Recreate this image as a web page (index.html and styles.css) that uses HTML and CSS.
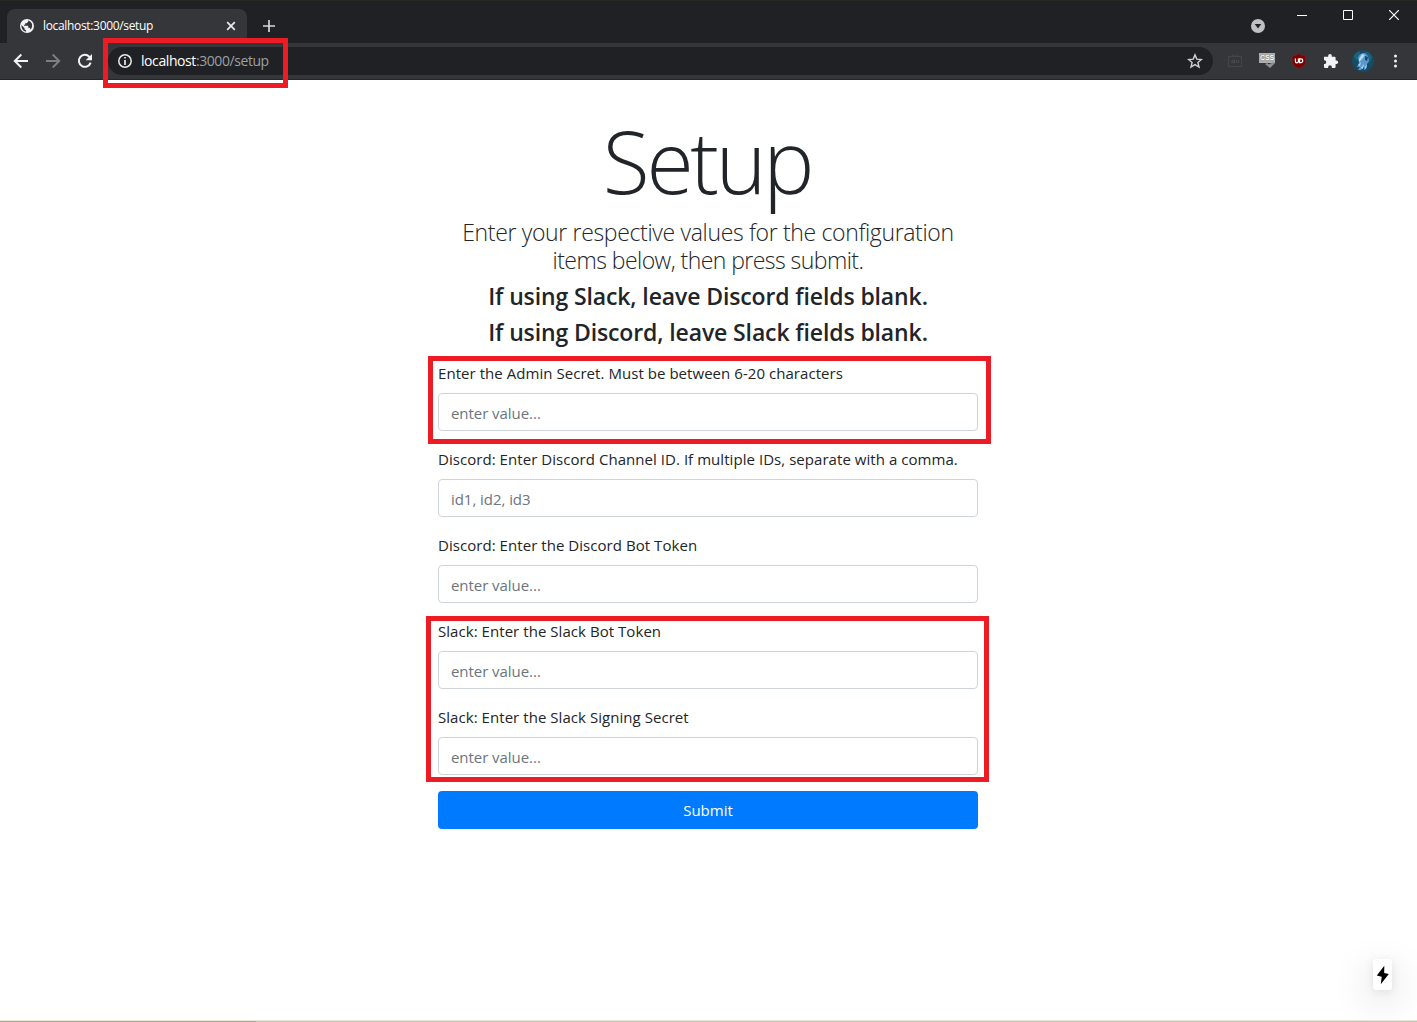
FILE: index.html
```html
<!DOCTYPE html>
<html lang="en">
<head>
<meta charset="utf-8">
<title>localhost:3000/setup</title>
<link rel="stylesheet" href="styles.css">
</head>
<body>
<div class="window">
  <header class="browser">
    <div class="tabstrip">
      <div class="tab">
        <svg class="globe" width="14" height="14" viewBox="0 0 14 14"><circle cx="7" cy="7" r="7" fill="#f1f3f4"/><path d="M1.400 6 4.500 9.100v1.100l1.600 1.400v1C3.500 12.500 1.200 9.800 1.400 6zM8.200 1.500v1.300L6.600 4.300H5.200v1.500H4v1h4.200v2h1.400l1 1.700c2.500-2.700 2.300-7.500-2.400-9z" fill="#35363a"/></svg>
        <span class="tab-title">localhost:3000/setup</span>
        <svg class="tab-close" width="10" height="10" viewBox="0 0 10 10"><path d="M1.200 1.200l7.600 7.600M8.800 1.200L1.200 8.800" stroke="#e8eaed" stroke-width="1.700"/></svg>
      </div>
      <svg class="new-tab" width="12" height="12" viewBox="0 0 12 12"><path d="M6 0v12M0 6h12" stroke="#d5d7da" stroke-width="1.700"/></svg>
      <div class="window-controls">
        <svg class="search-tabs" width="14" height="14" viewBox="0 0 14 14"><circle cx="7" cy="7" r="7" fill="#bdc1c6"/><path d="M3.700 5h6.600L7 9.600z" fill="#202124"/></svg>
        <svg width="10" height="11" viewBox="0 0 10 11"><path d="M0 5.500h10" stroke="#fff"/></svg>
        <svg width="10" height="11" viewBox="0 0 10 11"><path d="M.5.5h9v9h-9z" fill="none" stroke="#fff"/></svg>
        <svg width="10" height="10" viewBox="0 0 10 10"><path d="M0 0l10 10M10 0L0 10" stroke="#fff" stroke-width="1.200"/></svg>
      </div>
    </div>
    <div class="toolbar">
      <svg width="16" height="16" viewBox="0 0 16 16"><path d="M15 8H2M8.300 1.500L1.800 8l6.500 6.500" fill="none" stroke="#f1f3f4" stroke-width="2"/></svg>
      <svg width="16" height="16" viewBox="0 0 16 16"><path d="M1 8h13M7.700 1.500L14.200 8l-6.500 6.500" fill="none" stroke="#7d7f83" stroke-width="1.900"/></svg>
      <svg width="16" height="16" viewBox="0 0 16 16"><path d="M13.600 9.600A6 6 0 1 1 12.400 3.900L14 5.500" fill="none" stroke="#f1f3f4" stroke-width="2"/><path d="M15 1v6.300H8.700z" fill="#f1f3f4"/></svg>
      <div class="omnibox">
        <svg width="14" height="14" viewBox="0 0 14 14"><circle cx="7" cy="7" r="6.200" fill="none" stroke="#e8eaed" stroke-width="1.500"/><path d="M7 3v1.600M7 6v5" stroke="#e8eaed" stroke-width="1.700"/></svg>
        <span class="url"><b>localhost</b>:3000/setup</span>
        <svg class="star" width="16" height="16" viewBox="0 0 16 16"><path d="M8 1.900l1.800 4.200 4.600.4-3.500 3 1.100 4.500L8 11.600 4 14l1.100-4.500-3.500-3 4.600-.4z" fill="none" stroke="#cfd1d4" stroke-width="1.400"/></svg>
        <span class="mark mark-url"></span>
      </div>
      <div class="extensions">
        <svg width="16" height="16" viewBox="0 0 16 16"><path d="M1.500 3.500h13v10h-13zM5 1.500l3 2 3-2" fill="none" stroke="#45464a"/><path d="M4 8.500l2-1.500v3zM7.500 6.500v4M9.500 7v3M11.500 7v3" fill="none" stroke="#4a4b4f"/></svg>
        <div class="css-icon"><span>CSS</span><svg width="10" height="6" viewBox="0 0 10 6"><path d="M0 2l2-1 2 1.500L8 0l2 1-5 5z" fill="#909090"/></svg></div>
        <svg width="16" height="16" viewBox="0 0 16 16"><path d="M8 .5c2 1.500 4 2 6.700 2V8c0 3.500-2.500 6-6.700 7.700C3.800 14 1.300 11.500 1.300 8V2.500C4 2.500 6 2 8 .5z" fill="#800000" stroke="#65292b" stroke-width=".8"/><path d="M4.400 5.500v2.700c0 2.100 3 2.100 3 0V5.500M8.600 5.900h1.200c2.600 0 2.600 3.700 0 3.700H8.600z" fill="none" stroke="#fff" stroke-width="1.200"/></svg>
        <svg width="16" height="16" viewBox="0 0 16 16"><path d="M1 3.700h4.200v-.9a1.800 1.800 0 0 1 3.600 0v.9h2.500c.8 0 1.300.5 1.300 1.300v2.400h.8a1.800 1.800 0 0 1 0 3.600h-.8v2.700c0 .8-.5 1.300-1.300 1.300H8.900v-.8a1.900 1.900 0 0 0-3.800 0v.8H2.300c-.8 0-1.300-.5-1.300-1.300V11h.8a1.900 1.900 0 0 0 0-3.700H1z" fill="#f1f3f4"/></svg>
        <svg width="22" height="22" viewBox="0 0 22 22"><circle cx="11" cy="11" r="11" fill="#164b65"/><path d="M1.500 6a11 11 0 0 1 6-5l1 5-4 5zM13 1.500a10 10 0 0 1 7 6l-3 7-2-8z" fill="#17657b"/><path d="M6 8c1-4 4-5.500 7-5l3 3 1 5-2 3-1 5-2 1 0-4-3 4-3 0 2-3-3 0 2-4z" fill="#5b99cd"/><path d="M7 9l3-5 3 1-3 4-3 3zM6 15l3-3-1 4zM9 18l3-4-1 5zM13 17l2-3-1 5z" fill="#b4d9f5"/><path d="M13 6l3 1-1 4-2-1z" fill="#263f77"/></svg>
        <svg width="16" height="16" viewBox="0 0 16 16"><circle cx="8.500" cy="2.900" r="1.500" fill="#f1f3f4"/><circle cx="8.500" cy="8" r="1.500" fill="#f1f3f4"/><circle cx="8.500" cy="13.100" r="1.500" fill="#f1f3f4"/></svg>
      </div>
    </div>
  </header>
  <main class="page">
    <div class="container">
      <h1 class="display">Setup</h1>
      <div class="lead">
        <div class="lead-a">Enter your respective values for the configuration</div>
        <div class="lead-b">items below, then press submit.</div>
      </div>
      <h4 class="note">If using Slack, leave Discord fields blank.</h4>
      <h4 class="note">If using Discord, leave Slack fields blank.</h4>
      <form class="form">
        <div class="group">
          <label for="admin">Enter the Admin Secret. Must be between 6-20 characters</label>
          <input id="admin" placeholder="enter value...">
          <span class="mark mark-admin"></span>
        </div>
        <div class="group">
          <label for="channel">Discord: Enter Discord Channel ID. If multiple IDs, separate with a comma.</label>
          <input id="channel" placeholder="id1, id2, id3">
        </div>
        <div class="group">
          <label for="discord">Discord: Enter the Discord Bot Token</label>
          <input id="discord" placeholder="enter value...">
        </div>
        <div class="group">
          <label for="slack">Slack: Enter the Slack Bot Token</label>
          <input id="slack" placeholder="enter value...">
          <span class="mark mark-slack"></span>
        </div>
        <div class="group">
          <label for="signing">Slack: Enter the Slack Signing Secret</label>
          <input id="signing" placeholder="enter value...">
        </div>
        <button class="submit" type="button">Submit</button>
      </form>
    </div>
    <div class="bolt"><svg width="14" height="20" viewBox="0 0 14 20"><path d="M8.300.8L.8 10.600l4.900 1.200-.9 7.400 8-10.200-4.600-1.100z" fill="#000"/></svg></div>
  </main>
  <footer class="edge"><span></span></footer>
</div>
</body>
</html>
```
FILE: styles.css
```css
* { box-sizing: border-box; }
body { margin: 0; background: #fff; color: #212529; font-family: "Open Sans", "Noto Sans", sans-serif; }
svg { display: block; flex: none; }
.window { display: flex; flex-direction: column; width: 1417px; height: 1022px; overflow: hidden; }

.browser { height: 80px; background: #35363a; border-bottom: 1px solid #252629; }
.tabstrip { display: flex; height: 43px; background: #202124; border-top: 1px solid #262824; }
.tab { display: flex; align-items: center; width: 240px; height: 34px; margin: 8px 0 0 7px; padding: 0 11px 0 13px; background: #35363a; border-radius: 8px 8px 0 0; }
.tab-title { margin: -1px 0 0 9px; color: #fff; font-size: 12px; letter-spacing: -0.33px; white-space: nowrap; }
.tab-close { margin-left: auto; }
.new-tab { margin: 19px 0 0 16px; }
.window-controls { display: flex; gap: 36px; margin: 9px 18px 0 auto; }
.search-tabs { margin: 9px -4px 0 0; }
.toolbar { display: flex; align-items: center; gap: 16px; height: 36px; padding: 0 14px 0 13px; }
.toolbar > .omnibox { margin-left: -1px; }
.omnibox { position: relative; display: flex; align-items: center; flex: 1; height: 28px; padding: 0 10px; background: #202124; border-radius: 14px; }
.url { margin-left: 9px; color: #9aa0a6; font-size: 14px; line-height: 20px; letter-spacing: -0.42px; white-space: nowrap; }
.url b { color: #fff; font-weight: 400; }
.star { margin-left: auto; }
.extensions { display: flex; align-items: center; gap: 16px; margin-left: -2px; }
.extensions > svg:nth-child(5) { margin: 0 -3px; }
.css-icon { display: flex; flex-direction: column; align-items: center; width: 16px; height: 16px; }
.css-icon span { width: 16px; height: 10px; background: #adadad; color: #fff; font: 700 7px/10px "Liberation Sans", sans-serif; letter-spacing: -0.2px; text-align: center; text-shadow: 0 0 1px #444; }
.css-icon svg { margin: -1px 0 0 5px; }

.mark { position: absolute; z-index: 2; border: 5px solid #ed1c24; pointer-events: none; }
.mark-url { left: -5px; top: -9px; width: 185px; height: 50px; }
.mark-admin { left: -10px; top: -5px; width: 563px; height: 88px; }
.mark-slack { left: -12px; top: -3px; width: 563px; height: 166px; }

.page { display: flex; flex: 1; padding: 16px 25px 30px 438px; }
.container { width: 540px; text-align: center; }
.display { margin: 0; padding: 7px 0 0 0; font-size: 86px; font-weight: 300; line-height: 115px; letter-spacing: -3.3px; text-indent: -2px; }
.lead { margin: 0 0 8px; font-size: 23px; font-weight: 300; line-height: 28px; white-space: nowrap; }
.lead-a { letter-spacing: -0.34px; }
.lead-b { letter-spacing: -0.55px; }
.note { margin: 0 0 8px; font-size: 23px; font-weight: 600; line-height: 28px; letter-spacing: -0.12px; white-space: nowrap; }
.form { margin-top: 15px; text-align: left; }
.group { position: relative; display: flex; flex-direction: column; gap: 8px; margin-bottom: 16px; }
label { font-size: 15px; line-height: 24px; letter-spacing: 0.05px; white-space: nowrap; }
input { width: 540px; height: 38px; padding: 2px 12px 0; border: 1px solid #ced4da; border-radius: 4px; font: 15px "Open Sans", "Noto Sans", sans-serif; letter-spacing: -0.05px; }
input::placeholder { color: #6c757d; opacity: 1; }
.submit { display: block; width: 540px; height: 38px; padding: 0; border: 0; border-radius: 4px; background: #007bff; color: #fff; font: 15px "Open Sans", "Noto Sans", sans-serif; }
.bolt { display: flex; align-items: center; justify-content: center; align-self: flex-end; width: 19px; height: 31px; margin-left: auto; background: #fff; border-radius: 3px; box-shadow: 0 11px 40px rgba(0,0,0,.2), 0 2px 10px rgba(0,0,0,.09); }
.edge { height: 2px; background: #c7c4b2; border-top: 1px solid #e8e7d6; }
.edge span { display: block; width: 256px; height: 1px; background: #aaa89a; }
```
